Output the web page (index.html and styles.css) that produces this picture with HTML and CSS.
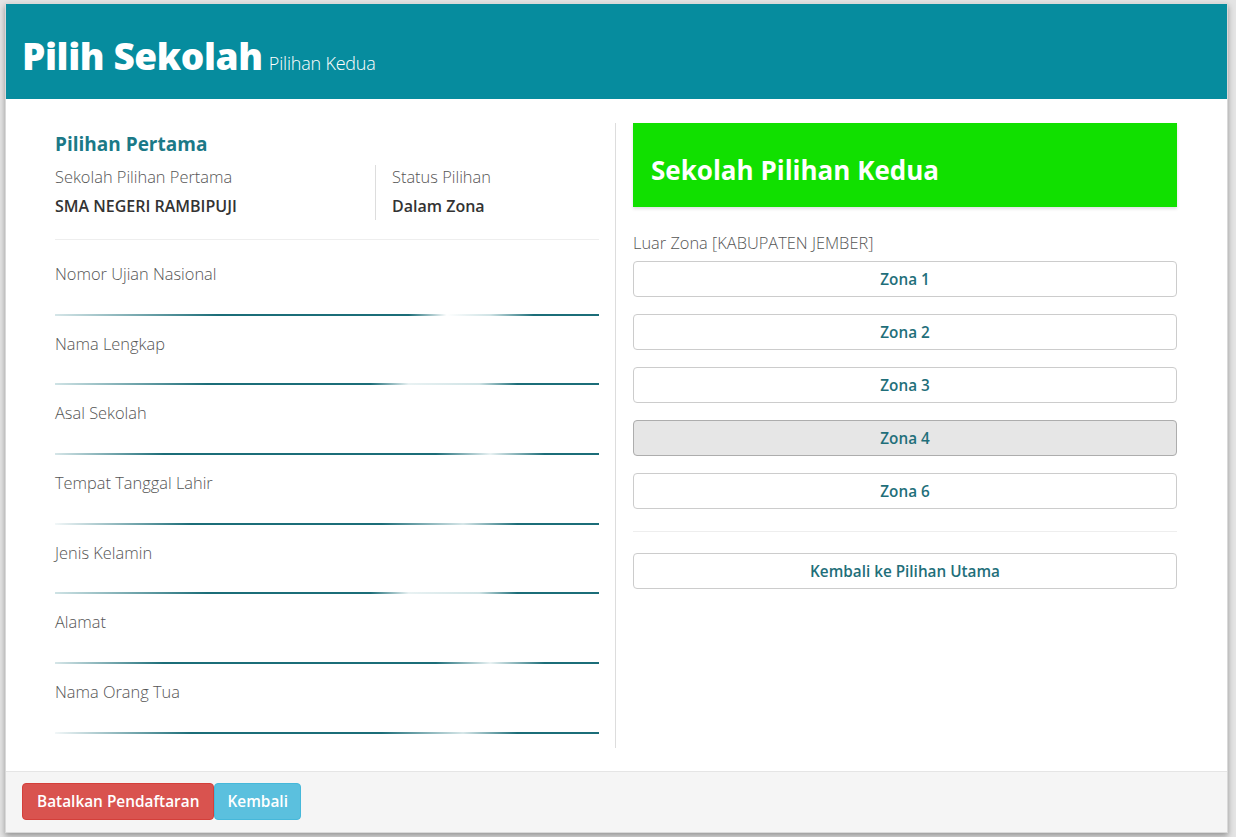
FILE: index.html
```html
<!DOCTYPE html>
<html lang="id">
<head>
<meta charset="utf-8">
<title>Pilih Sekolah</title>
<link rel="stylesheet" href="styles.css">
</head>
<body>
<div class="modal">
  <div class="modal-header">
    <h1 class="title">Pilih Sekolah <small>Pilihan Kedua</small></h1>
  </div>
  <div class="modal-body">
    <div class="col col-left">
      <h3 class="section-title">Pilihan Pertama</h3>
      <div class="first-choice">
        <div class="fc-item">
          <div class="label">Sekolah Pilihan Pertama</div>
          <div class="value">SMA NEGERI RAMBIPUJI</div>
        </div>
        <div class="fc-item fc-status">
          <div class="label">Status Pilihan</div>
          <div class="value">Dalam Zona</div>
        </div>
      </div>
      <hr class="sep">
      <div class="field"><div class="label">Nomor Ujian Nasional</div><div class="line l1"></div></div>
      <div class="field"><div class="label">Nama Lengkap</div><div class="line l2"></div></div>
      <div class="field"><div class="label">Asal Sekolah</div><div class="line l3"></div></div>
      <div class="field"><div class="label">Tempat Tanggal Lahir</div><div class="line l4"></div></div>
      <div class="field"><div class="label">Jenis Kelamin</div><div class="line l2"></div></div>
      <div class="field"><div class="label">Alamat</div><div class="line l3"></div></div>
      <div class="field"><div class="label">Nama Orang Tua</div><div class="line l4"></div></div>
    </div>
    <div class="col col-right">
      <div class="green-box">Sekolah Pilihan Kedua</div>
      <div class="zona-label">Luar Zona [KABUPATEN JEMBER]</div>
      <div class="zona-list">
        <button class="btn-zona">Zona 1</button>
        <button class="btn-zona">Zona 2</button>
        <button class="btn-zona">Zona 3</button>
        <button class="btn-zona active">Zona 4</button>
        <button class="btn-zona">Zona 6</button>
      </div>
      <hr class="sep sep-right">
      <button class="btn-zona btn-back">Kembali ke Pilihan Utama</button>
    </div>
  </div>
  <div class="modal-footer">
    <button class="btn btn-danger">Batalkan Pendaftaran</button><button class="btn btn-info">Kembali</button>
  </div>
</div>
</body>
</html>
```
FILE: styles.css
```css
* { box-sizing: border-box; }
html, body { height: 100%; }
body {
  margin: 0;
  background: #e4e4e4;
  font-family: "Open Sans", "Noto Sans", sans-serif;
  color: #333;
  padding: 3px 8px 0 5px;
}
.modal {
  width: 1223px;
  background: #fff;
  box-shadow: 0 3px 6px rgba(0,0,0,0.35);
  border: 1px solid rgba(0,0,0,0.15);
}
.modal-header {
  background: #068c9e;
  height: 95px;
  padding: 0 16px;
  display: flex;
  align-items: center;
}
.title {
  margin: 8px 0 0;
  color: #fff;
  font-size: 37px;
  font-weight: 800;
  letter-spacing: -0.4px;
  line-height: 1;
}
.title small {
  font-size: 18px;
  font-weight: 300;
  letter-spacing: -0.2px;
  margin-left: -3px;
}
.modal-body {
  display: flex;
  padding: 24px 50px 23px 49px;
}
.col { flex: 0 0 auto; }
.col-left {
  width: 561px;
  padding-right: 16px;
  padding-bottom: 14px;
  border-right: 1px solid #ddd;
}
.col-right {
  width: 561px;
  padding-left: 17px;
}
.section-title {
  margin: 9px 0 0;
  font-size: 19px;
  font-weight: 700;
  color: #1b7987;
  line-height: 24px;
}
.first-choice {
  display: flex;
  margin-top: 9px;
}
.fc-item {
  width: 320px;
}
.fc-status {
  width: auto;
  flex: 1;
  border-left: 1px solid #ddd;
  padding-left: 16px;
}
.label {
  font-size: 16.4px;
  font-weight: 300;
  color: #555;
  line-height: 22px;
}
.fc-item .label { line-height: 24px; }
.value {
  font-size: 16px;
  font-weight: 600;
  color: #333;
  line-height: 24px;
  margin-top: 5px;
  padding-bottom: 2px;
}
.sep {
  border: 0;
  border-top: 1px solid #eee;
  margin: 19px 0 0;
}
.field {
  padding-top: 23px;
}
.field + .field { padding-top: 17px; }
.line {
  height: 2px;
  margin-top: 28.67px;
  background: linear-gradient(to right, #d6e6e8 0%, #1b6d78 30%, #1b6d78 65%, #fff 72%, #cfe3e5 80%, #1b6d78 88%, #1b6d78 100%);
}
.l2 { background: linear-gradient(to right, #cfe3e5 0%, #1b6d78 28%, #1b6d78 58%, #e9f2f3 65%, #cfe3e5 78%, #1b6d78 85%, #1b6d78 100%); }
.l3 { background: linear-gradient(to right, #d6e6e8 0%, #1b6d78 20%, #1b6d78 70%, #eaf3f4 80%, #1b6d78 90%, #1b6d78 100%); }
.l4 { background: linear-gradient(to right, #f2f7f8 0%, #1b6d78 25%, #1b6d78 60%, #d7e7e9 75%, #1b6d78 85%, #1b6d78 100%); }
.green-box {
  height: 84px;
  background: #11e000;
  color: #fff;
  font-size: 26px;
  font-weight: 700;
  display: flex;
  align-items: center;
  padding-left: 18px;
  padding-top: 10px;
  box-shadow: 0 2px 3px rgba(0,0,0,0.12);
}
.zona-label {
  margin-top: 25px;
  font-size: 16.4px;
  font-weight: 300;
  color: #555;
  line-height: 22px;
}
.zona-list {
  display: flex;
  flex-direction: column;
  gap: 17px;
  margin-top: 7px;
}
.btn-zona {
  display: block;
  width: 100%;
  height: 36px;
  background: #fff;
  border: 1px solid #ccc;
  border-radius: 4px;
  font-family: "Open Sans", "Noto Sans", sans-serif;
  font-size: 15.3px;
  font-weight: 600;
  color: #1f6f7a;
  cursor: pointer;
}
.btn-zona.active {
  background: #e6e6e6;
  border-color: #adadad;
}
.sep-right { margin: 22px 0 0; }
.btn-back { margin-top: 21px; }
.modal-footer {
  background: #f5f5f5;
  border-top: 1px solid #e5e5e5;
  padding: 11px 16px 12px;
  display: flex;
}
.btn {
  height: 37px;
  border: 1px solid transparent;
  border-radius: 4px;
  color: #fff;
  font-family: "Open Sans", "Noto Sans", sans-serif;
  font-size: 15.4px;
  font-weight: 600;
  padding: 0 14px;
}
.btn-info { padding: 0 12px; }
.btn-danger { background: #d9534f; border-color: #d43f3a; }
.btn-info { background: #5bc0de; border-color: #46b8da; }
```
